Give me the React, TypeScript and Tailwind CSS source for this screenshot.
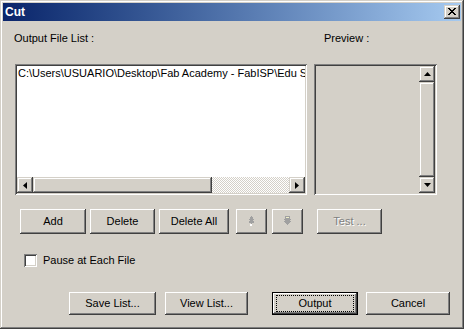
const raised =
  "shadow-[inset_-1px_-1px_0_#404040,inset_1px_1px_0_#fff,inset_-2px_-2px_0_#808080,inset_2px_2px_0_#d4d0c8]";
const frame =
  "shadow-[inset_-1px_-1px_0_#404040,inset_1px_1px_0_#d4d0c8,inset_-2px_-2px_0_#808080,inset_2px_2px_0_#fff]";
const sunken =
  "shadow-[inset_1px_1px_0_#808080,inset_-1px_-1px_0_#fff,inset_2px_2px_0_#404040,inset_-2px_-2px_0_#d4d0c8]";

function Arrow({ dir }: { dir: "left" | "right" | "up" | "down" }) {
  const pts = {
    left: "4,0 4,7 0,3.5",
    right: "0,0 0,7 4,3.5",
    up: "0,4 7,4 3.5,0",
    down: "0,0 7,0 3.5,4",
  }[dir];
  const horiz = dir === "left" || dir === "right";
  return (
    <svg width={horiz ? 4 : 7} height={horiz ? 7 : 4} viewBox={horiz ? "0 0 4 7" : "0 0 7 4"}>
      <polygon points={pts} fill="#000" />
    </svg>
  );
}

function ScrollBtn({ dir }: { dir: "left" | "right" | "up" | "down" }) {
  return (
    <div className={`w-[16px] h-[16px] shrink-0 bg-[#d4d0c8] flex items-center justify-center ${frame}`}>
      <Arrow dir={dir} />
    </div>
  );
}

function Button({ label, w, className = "" }: { label: string; w: string; className?: string }) {
  return (
    <div className={`${w} h-full bg-[#d4d0c8] flex items-center justify-center text-black ${raised} ${className}`}>
      {label}
    </div>
  );
}

export default function App() {
  return (
    <div className="w-[464px] h-[329px] overflow-hidden bg-[#d4d0c8] font-['Liberation_Sans',Arial,sans-serif] text-[11px] leading-[13px] text-black select-none">
      <div className={`w-full h-full p-[3px] flex flex-col ${frame}`}>
        {/* title bar */}
        <div className="h-[18px] shrink-0 flex items-center bg-linear-to-r from-[#0a246a] to-[#a6caf0]">
          <span className="ml-[2px] text-white font-bold text-[12px]">Cut</span>
          <div className={`ml-auto mr-[1px] w-[16px] h-[14px] bg-[#d4d0c8] flex items-center justify-center ${frame}`}>
            <svg width="8" height="7" viewBox="0 0 8 7" shapeRendering="crispEdges" className="mb-[1px]">
              <path
                d="M0 0h2v1H0zM6 0h2v1H6zM1 1h2v1H1zM5 1h2v1H5zM2 2h4v1H2zM3 3h2v1H3zM2 4h4v1H2zM1 5h2v1H1zM5 5h2v1H5zM0 6h2v1H0zM6 6h2v1H6z"
                fill="#000"
              />
            </svg>
          </div>
        </div>

        {/* labels */}
        <div className="mt-[11px] h-[13px] flex">
          <span className="ml-[11px] w-[310px]">Output File List :</span>
          <span>Preview :</span>
        </div>

        {/* list + preview */}
        <div className="mt-[19px] h-[131px] flex">
          <div className={`ml-[12px] w-[292px] h-full bg-white p-[2px] flex flex-col ${sunken}`}>
            <div className="flex-1 overflow-hidden whitespace-nowrap pl-[1px] pt-[1px]">
              C:\Users\USUARIO\Desktop\Fab Academy - FabISP\Edu S
            </div>
            <div className="h-[16px] flex">
              <ScrollBtn dir="left" />
              <div className={`w-[179px] h-full bg-[#d4d0c8] ${frame}`} />
              <div className="flex-1 bg-[repeating-conic-gradient(#d4d0c8_0_25%,#fff_0_50%)] bg-[length:2px_2px]" />
              <ScrollBtn dir="right" />
            </div>
          </div>
          <div className={`ml-[7px] w-[123px] h-full bg-[#d4d0c8] p-[2px] flex justify-end ${sunken}`}>
            <div className="w-[16px] h-full flex flex-col">
              <ScrollBtn dir="up" />
              <div className={`flex-1 bg-[#d4d0c8] ${frame}`} />
              <ScrollBtn dir="down" />
            </div>
          </div>
        </div>

        {/* action buttons */}
        <div className="mt-[14px] h-[25px] flex">
          <Button label="Add" w="w-[66px]" className="ml-[17px]" />
          <Button label="Delete" w="w-[65px]" className="ml-[4px]" />
          <Button label="Delete All" w="w-[70px]" className="ml-[4px]" />
          <div className={`ml-[7px] w-[31px] h-full bg-[#d4d0c8] flex items-center justify-center ${raised}`}>
            <svg width="7" height="11" viewBox="0 0 7 11" shapeRendering="crispEdges">
              <path d="M3 0h1v1H3zM2 1h3v2H2zM1 3h5v1H1zM2 4h3v1H2zM1 5h5v2H1zM3 7h1v1H3z" fill="#a0a0a0" />
              <path d="M2 8h2v2H2z" fill="#fff" />
            </svg>
          </div>
          <div className={`ml-[5px] w-[31px] h-full bg-[#d4d0c8] flex items-center justify-center ${raised}`}>
            <svg width="7" height="11" viewBox="0 0 7 11" shapeRendering="crispEdges">
              <path d="M1 0h5v3H1z" fill="#a0a0a0" />
              <path d="M2 1h3v1H2z" fill="#eeeec8" />
              <path d="M0 3h7v1H0zM1 4h5v1H1zM0 5h7v1H0zM1 6h5v1H1zM2 7h3v1H2zM3 8h1v1H3z" fill="#a0a0a0" />
            </svg>
          </div>
          <div
            className={`ml-[14px] w-[65px] h-full bg-[#d4d0c8] flex items-center justify-center text-[#808080] [text-shadow:1px_1px_0_#fff] ${raised}`}
          >
            Test ...
          </div>
        </div>

        {/* checkbox */}
        <div className="mt-[20px] h-[13px] flex items-center">
          <div className={`ml-[21px] w-[13px] h-[13px] bg-white ${sunken}`} />
          <span className="ml-[6px]">Pause at Each File</span>
        </div>

        {/* bottom buttons */}
        <div className="mt-[25px] h-[23px] flex">
          <Button label="Save List..." w="w-[87px]" className="ml-[66px]" />
          <Button label="View List..." w="w-[83px]" className="ml-[9px]" />
          <div className={`ml-[24px] w-[86px] h-full bg-[#d4d0c8] border border-black px-[3px] py-[2px] flex ${raised}`}>
            <div className="flex-1 border border-dotted border-black flex items-center justify-center">Output</div>
          </div>
          <Button label="Cancel" w="w-[84px]" className="ml-[8px]" />
        </div>
      </div>
    </div>
  );
}
